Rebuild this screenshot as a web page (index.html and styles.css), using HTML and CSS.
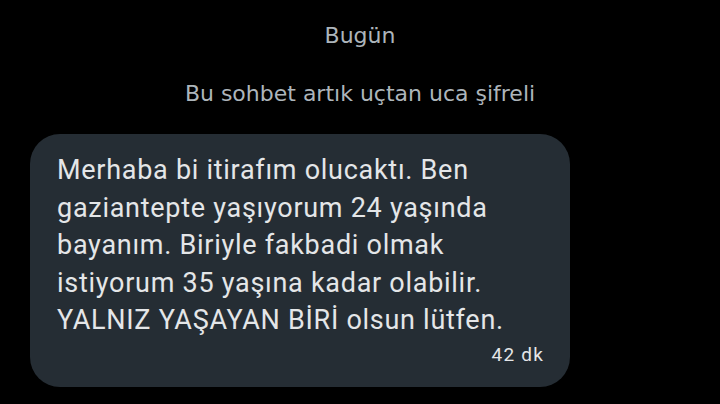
FILE: index.html
```html
<!DOCTYPE html>
<html lang="tr">
<head>
<meta charset="utf-8">
<link rel="stylesheet" href="styles.css">
</head>
<body>
<main class="chat">
  <div class="day">Bugün</div>
  <div class="notice">Bu sohbet artık uçtan uca şifreli</div>
  <div class="bubble">
    <p class="msg">Merhaba bi itirafım olucaktı. Ben<br>gaziantepte yaşıyorum 24 yaşında<br>bayanım. Biriyle fakbadi olmak<br>istiyorum 35 yaşına kadar olabilir.<br>YALNIZ YAŞAYAN BİRİ olsun lütfen.</p>
    <div class="time">42 dk</div>
  </div>
</main>
</body>
</html>
```
FILE: styles.css
```css
html, body {
  margin: 0;
  padding: 0;
  background: #000;
}
.chat {
  width: 720px;
  height: 404px;
  display: flex;
  flex-direction: column;
  overflow: hidden;
}
.day {
  margin-top: 22px;
  text-align: center;
  font-family: "DejaVu Sans", "Open Sans", sans-serif;
  font-size: 22px;
  line-height: 28px;
  color: #adb5bb;
}
.notice {
  margin-top: 30px;
  text-align: center;
  font-family: "DejaVu Sans", "Open Sans", sans-serif;
  font-size: 22px;
  line-height: 28px;
  color: #adb5bb;
}
.bubble {
  margin: 26px 0 0 30px;
  width: 540px;
  height: 253px;
  box-sizing: border-box;
  padding: 18px 26px 0 27px;
  background: #252d34;
  border-radius: 30px;
  display: flex;
  flex-direction: column;
}
.msg {
  margin: 0;
  font-family: Roboto, "Noto Sans", sans-serif;
  font-size: 27px;
  line-height: 37.5px;
  letter-spacing: 0.72px;
  white-space: nowrap;
  color: #e4e6e8;
}
.time {
  align-self: flex-end;
  margin-top: 3px;
  font-family: Roboto, "Noto Sans", sans-serif;
  font-size: 19px;
  line-height: 24px;
  letter-spacing: 1.2px;
  color: #e4e6e8;
}
```
